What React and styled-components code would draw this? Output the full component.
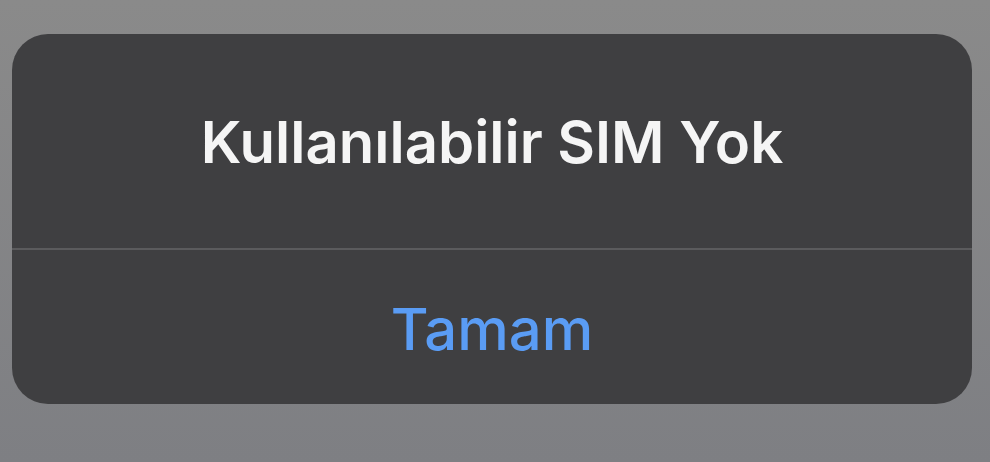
import React from "react";
import styled, { createGlobalStyle } from "styled-components";

const Global = createGlobalStyle`
  html, body { margin: 0; padding: 0; }
  body {
    width: 990px;
    height: 462px;
    overflow: hidden;
    background: linear-gradient(#8a8a8a, #7e7f83);
    font-family: Inter, "Noto Sans", sans-serif;
  }
`;

const Screen = styled.div`
  width: 990px;
  height: 462px;
  box-sizing: border-box;
  padding: 34px 18px 0 12px;
`;

const Dialog = styled.div`
  height: 370px;
  background: #3f3f41;
  border-radius: 36px;
  display: flex;
  flex-direction: column;
  overflow: hidden;
`;

const TitleArea = styled.div`
  height: 216px;
  display: flex;
  align-items: center;
  justify-content: center;
  border-bottom: 2px solid #5b5b5d;
  box-sizing: border-box;
`;

const Title = styled.h1`
  margin: 0;
  padding-top: 2px;
  color: #f5f5f5;
  font-size: 58px;
  font-weight: 600;
  letter-spacing: 0px;
`;

const Button = styled.button`
  flex: 1;
  border: 0;
  background: transparent;
  color: #5a9cf4;
  font-family: Inter, "Noto Sans", sans-serif;
  font-size: 58px;
  font-weight: 500;
  padding: 4px 0 0 0;
  cursor: pointer;
`;

export default function App() {
  return (
    <>
      <Global />
      <Screen>
        <Dialog>
          <TitleArea>
            <Title>Kullanılabilir SIM Yok</Title>
          </TitleArea>
          <Button>Tamam</Button>
        </Dialog>
      </Screen>
    </>
  );
}
